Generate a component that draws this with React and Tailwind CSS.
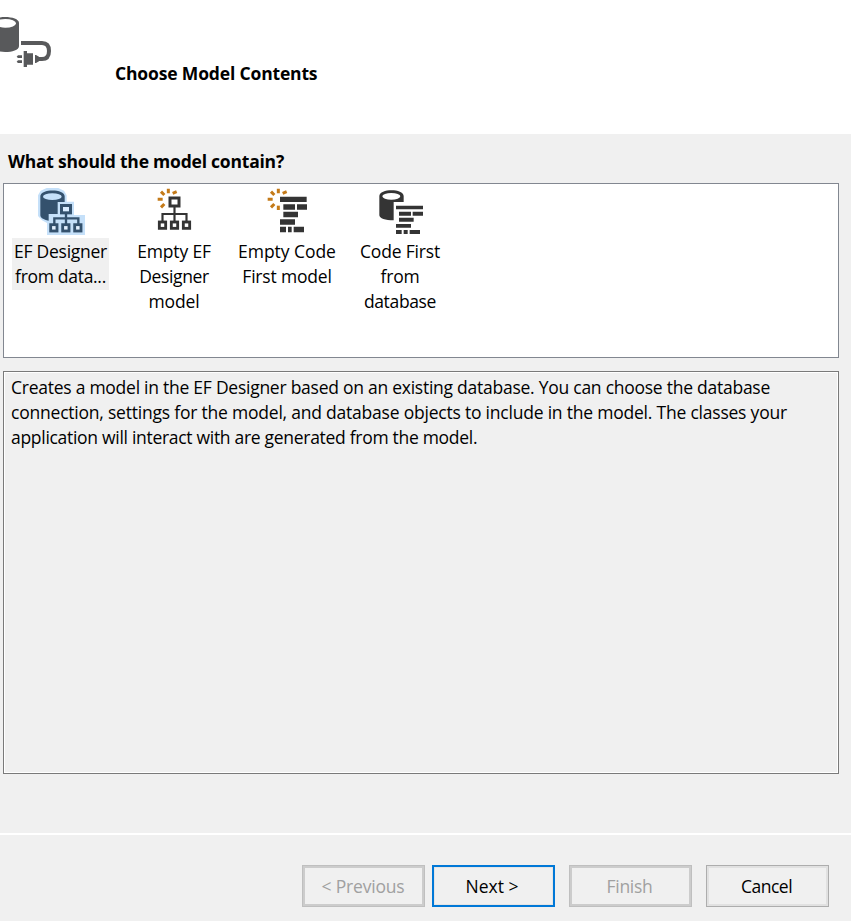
const INK = '#343434';
const NAVY = '#34516d';

function HeaderIcon() {
  return (
    <svg className="block h-[75px] w-[60px] shrink-0" viewBox="0 0 180 225" fill="#58595b">
      <path d="M-26 69C-26 45 57 45 57 69V138C57 162 -26 162 -26 138Z" />
      <ellipse cx="16" cy="70" rx="32" ry="13" fill="#fff" />
      <path d="M63 129H126Q147 129 147 153Q147 177 126 177H114" fill="none" stroke="#58595b" strokeWidth="12" />
      <path d="M105 165H108L117 170V184L108 189H105ZM71 153H81V160H99V194H81V201H71ZM54 166H66V174H54L50 170ZM54 181H66V189H54L50 185Z" />
    </svg>
  );
}

function Spark({ x = 0 }) {
  return (
    <g transform={`translate(${x} 0)`} stroke="#c47a18" strokeWidth="9">
      <path d="M73 14V28M51 23L61 33M41 46H56M51 70L61 60M86 28L98 23" />
    </g>
  );
}

function Icon({ className, children }) {
  return (
    <svg className={`block h-[54px] w-16 ${className}`} viewBox="0 0 192 162">
      {children}
    </svg>
  );
}

function DesignerDatabaseIcon() {
  return (
    <Icon className="ml-[26px]">
      <path d="M24 34L32 20L50 12H85L102 20L110 34V53H132V93H165V153H51V117L36 109L24 96Z" fill="#c5e0f9" />
      <path d="M31 37C31 14 104 14 104 37V54H83V90H56V110C40 107 31 101 31 94Z" fill={NAVY} />
      <ellipse cx="67" cy="38" rx="28" ry="10" fill="#c5e0f9" />
      <g fill="none" stroke={NAVY}>
        <path d="M108 89V124M73 122V103H145V122" strokeWidth="7" />
        <rect x="94.5" y="64.5" width="27" height="22" strokeWidth="9" fill="#d9ecff" />
        <rect x="62" y="122" width="19" height="19" strokeWidth="8.5" fill="#e3f1ff" />
        <rect x="98" y="122" width="19" height="19" strokeWidth="8.5" fill="#e3f1ff" />
        <rect x="134" y="122" width="19" height="19" strokeWidth="8.5" fill="#e3f1ff" />
      </g>
    </Icon>
  );
}

function EmptyDesignerIcon() {
  return (
    <Icon className="ml-[27px]">
      <Spark />
      <g fill="#fff" stroke={INK}>
        <path d="M91.5 67V112M55.5 111V90H127.5V111" strokeWidth="6.5" fill="none" />
        <rect x="78" y="42" width="27" height="24" strokeWidth="9" />
        <rect x="46" y="114" width="19" height="19" strokeWidth="8.5" />
        <rect x="82" y="114" width="19" height="19" strokeWidth="8.5" />
        <rect x="118" y="114" width="19" height="19" strokeWidth="8.5" />
      </g>
    </Icon>
  );
}

function EmptyCodeIcon() {
  return (
    <Icon className="ml-[26px]">
      <Spark x={-6} />
      <path d="M67 65V78" stroke="#c47a18" strokeWidth="9" />
      <path
        d="M72 38H152V54H72ZM82 61H117V77H82ZM123 61H153V77H123ZM82 83H126V100H82ZM72 106H117V122H72ZM72 128H90V145H72ZM96 128H107V145H96ZM113 128H144V145H113Z"
        fill={INK}
      />
    </Icon>
  );
}

function CodeDatabaseIcon() {
  return (
    <Icon className="ml-[27px]">
      <path d="M28 36C28 13 101 13 101 36V54H71V109C46 109 28 103 28 94Z" fill={INK} />
      <ellipse cx="64" cy="37" rx="27" ry="10" fill="#fff" />
      <path
        d="M78 65H159V76H78ZM87 83H123V95H87ZM128 83H159V95H128ZM87 101H131V113H87ZM78 120H123V131H78ZM78 138H95V150H78ZM101 138H113V150H101ZM119 138H150V150H119Z"
        fill={INK}
      />
    </Icon>
  );
}

function Item({ icon, lines, selected }) {
  return (
    <div className="flex w-[113px] flex-col">
      {icon}
      <div className={`mx-auto flex h-[52px] w-[97px] flex-col items-center whitespace-nowrap leading-[25px] ${selected ? 'bg-[#f0f0f0]' : 'pl-px'}`}>
        {lines.map(([text, spacing]) => (
          <span key={text} className={`block h-[25px] shrink-0 pt-px ${spacing}`}>{text}</span>
        ))}
      </div>
    </div>
  );
}

const items = [
  { icon: <DesignerDatabaseIcon />, selected: true, lines: [['EF Designer', 'tracking-[-0.25px]'], ['from data...', 'tracking-[-0.3px]']] },
  { icon: <EmptyDesignerIcon />, lines: [['Empty EF', 'tracking-[-0.15px]'], ['Designer', 'tracking-[-0.35px]'], ['model', 'tracking-[-0.1px]']] },
  { icon: <EmptyCodeIcon />, lines: [['Empty Code', 'tracking-[-0.05px]'], ['First model', 'tracking-[-0.18px]']] },
  { icon: <CodeDatabaseIcon />, lines: [['Code First', 'tracking-[-0.18px]'], ['from', 'tracking-[-0.2px]'], ['database', 'tracking-[-0.35px]']] },
];

function Button({ children, className }) {
  return (
    <button className={`flex h-[42px] w-[123px] items-center justify-center whitespace-nowrap bg-[#f0f0f0] ${className}`}>
      {children}
    </button>
  );
}

export default function App() {
  return (
    <div className="flex h-[921px] w-[851px] flex-col overflow-hidden bg-[#f0f0f0] font-['Open_Sans','Noto_Sans',sans-serif] text-[17.5px] text-black">
      <header className="flex h-[134px] shrink-0 bg-white">
        <HeaderIcon />
        <h1 className="ml-[55px] mt-[61px] whitespace-nowrap font-bold leading-[25px] tracking-[-0.16px]">Choose Model Contents</h1>
      </header>
      <main className="flex flex-col pl-[3px] pr-3">
        <h2 className="ml-[5px] mt-[15px] h-[34px] whitespace-nowrap font-bold leading-[25px] tracking-[-0.22px]">What should the model contain?</h2>
        <section className="flex h-[175px] border border-[#828790] bg-white">
          {items.map((item) => (
            <Item key={item.lines[0][0]} {...item} />
          ))}
        </section>
        <section className="mt-[13px] h-[403px] border border-[#7a7a7a] pl-[7px] pt-[3px] leading-[25px] whitespace-nowrap shadow-[inset_0_0_0_1px_#fff]">
          <p className="tracking-[-0.255px]">Creates a model in the EF Designer based on an existing database. You can choose the database</p>
          <p className="tracking-[-0.215px]">connection, settings for the model, and database objects to include in the model. The classes your</p>
          <p className="tracking-[-0.295px]">application will interact with are generated from the model.</p>
        </section>
      </main>
      <footer className="mt-[59px] flex border-t-2 border-white pl-[302px] pt-[30px]">
        <Button className="border border-[#bfbfbf] pr-px text-[#a0a0a0] tracking-[-0.2px] shadow-[inset_0_0_0_2px_#cccccc]">&lt; Previous</Button>
        <Button className="ml-[7px] border-2 border-[#0078d7] pr-[3px] shadow-[inset_0_0_0_1px_#e5e5e5]">Next &gt;</Button>
        <Button className="ml-[14px] border border-[#bfbfbf] pr-[2px] text-[#a0a0a0] tracking-[-0.3px] shadow-[inset_0_0_0_2px_#cccccc]">Finish</Button>
        <Button className="ml-[14px] border border-[#adadad] pr-[2px] tracking-[-0.5px] shadow-[inset_0_0_0_2px_#e1e1e1]">Cancel</Button>
      </footer>
    </div>
  );
}
